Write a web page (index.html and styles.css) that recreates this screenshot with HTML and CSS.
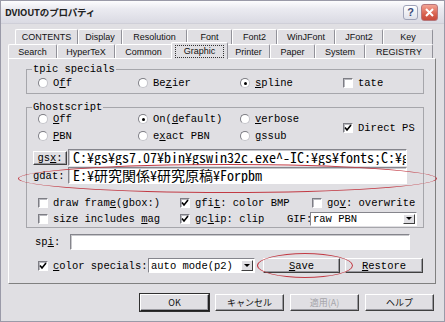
FILE: index.html
```html
<!DOCTYPE html>
<html lang="ja">
<head>
    <meta charset="UTF-8">
    <title>DVIOUTのプロパティ</title>
    <link rel="stylesheet" href="styles.css">
</head>
<body>
    <div class="window">
        <div class="titlebar">
            <span class="title">DVIOUTのプロパティ</span>
            <div class="caption-btns">
                <span class="cbtn help">?</span>
                <span class="cbtn close">
                    <svg width="9" height="9" viewBox="0 0 9 9"><path d="M1 1L8 8M8 1L1 8" stroke="#fff" stroke-width="2"/></svg>
                </span>
            </div>
        </div>

        <div class="content">
            <div class="tabs">
                <div class="tab-row back">
                    <span class="tab">CONTENTS</span>
                    <span class="tab">Display</span>
                    <span class="tab">Resolution</span>
                    <span class="tab">Font</span>
                    <span class="tab">Font2</span>
                    <span class="tab">WinJFont</span>
                    <span class="tab">JFont2</span>
                    <span class="tab">Key</span>
                </div>
                <div class="tab-row front">
                    <span class="tab">Search</span>
                    <span class="tab">HyperTeX</span>
                    <span class="tab">Common</span>
                    <span class="tab active"><span class="focus">Graphic</span></span>
                    <span class="tab">Printer</span>
                    <span class="tab">Paper</span>
                    <span class="tab">System</span>
                    <span class="tab">REGISTRY</span>
                </div>
            </div>

            <div class="panel">
                <fieldset class="group tpic">
                    <legend>tpic specials</legend>
                    <div class="opts">
                        <label class="opt"><span class="radio"></span><span>O<u>f</u>f</span></label>
                        <label class="opt"><span class="radio"></span><span>Be<u>z</u>ier</span></label>
                        <label class="opt"><span class="radio on"></span><span><u>s</u>pline</span></label>
                        <label class="opt"><span class="check"></span><span>tate</span></label>
                    </div>
                </fieldset>

                <fieldset class="group gs">
                    <legend>Ghostscript</legend>
                    <div class="opts gs-opts">
                        <label class="opt"><span class="radio"></span><span><u>O</u>ff</span></label>
                        <label class="opt"><span class="radio on"></span><span>On(<u>d</u>efault)</span></label>
                        <label class="opt"><span class="radio"></span><span><u>v</u>erbose</span></label>
                        <label class="opt direct"><span class="check on"><svg width="8" height="8" viewBox="0 0 8 8"><path d="M1 3.5L3 6L7 1" fill="none" stroke="#000" stroke-width="1.6"/></svg></span><span>Direct PS</span></label>
                        <label class="opt"><span class="radio"></span><span><u>P</u>BN</span></label>
                        <label class="opt"><span class="radio"></span><span>e<u>x</u>act PBN</span></label>
                        <label class="opt"><span class="radio"></span><span><u>g</u>ssub</span></label>
                    </div>

                    <div class="path-row">
                        <span class="btn gsx"><span>gs<u>x</u>:</span></span>
                        <div class="field path">C:¥gs¥gs7.07¥bin¥gswin32c.exe^-IC:¥gs¥fonts;C:¥gs¥lib</div>
                    </div>
                    <div class="path-row gdat-row">
                        <span class="path-label">gdat:</span>
                        <div class="field path">E:¥研究関係¥研究原稿¥Forpbm</div>
                    </div>

                    <div class="check-row first">
                        <label class="opt c1"><span class="check"></span><span>draw fram<u>e</u>(gbox:)</span></label>
                        <label class="opt c2"><span class="check on"><svg width="8" height="8" viewBox="0 0 8 8"><path d="M1 3.5L3 6L7 1" fill="none" stroke="#000" stroke-width="1.6"/></svg></span><span>gfi<u>t</u>: color BMP</span></label>
                        <label class="opt"><span class="check"></span><span>go<u>v</u>: overwrite</span></label>
                    </div>
                    <div class="check-row">
                        <label class="opt c1"><span class="check"></span><span>size includes <u>m</u>ag</span></label>
                        <label class="opt c2 narrow"><span class="check on"><svg width="8" height="8" viewBox="0 0 8 8"><path d="M1 3.5L3 6L7 1" fill="none" stroke="#000" stroke-width="1.6"/></svg></span><span>gc<u>l</u>ip: clip</span></label>
                        <span class="gif-label">GIF:</span>
                        <div class="select gif"><span class="select-text">raw PBN</span><span class="arrow"></span></div>
                    </div>
                </fieldset>

                <div class="spi-row">
                    <span class="spi-label">sp<u>i</u>:</span>
                    <div class="field spi"></div>
                </div>

                <div class="color-row">
                    <label class="opt color-check"><span class="check on"><svg width="8" height="8" viewBox="0 0 8 8"><path d="M1 3.5L3 6L7 1" fill="none" stroke="#000" stroke-width="1.6"/></svg></span><span><u>c</u>olor specials:</span></label>
                    <div class="select mode"><span class="select-text">auto mode(p2)</span><span class="arrow"></span></div>
                    <span class="btn save"><span><u>S</u>ave</span></span>
                    <span class="btn restore"><span><u>R</u>estore</span></span>
                </div>
            </div>

            <div class="dlg-btns">
                <span class="btn dlg default">OK</span>
                <span class="btn dlg">キャンセル</span>
                <span class="btn dlg disabled">適用(A)</span>
                <span class="btn dlg">ヘルプ</span>
            </div>
        </div>

        <!-- red marks drawn over the screenshot -->
        <div class="mark mark-gdat"></div>
        <div class="mark mark-save"></div>
    </div>
</body>
</html>
```

FILE: styles.css
```css
body {
    margin: 0;
    background: #fff;
}

.window {
    position: relative;
    width: 445px;
    height: 322px;
    box-sizing: border-box;
    border: 1px solid #9a9aa8;
    background: #e0dfe3;
    font-family: "Liberation Mono", "Noto Sans CJK JP", monospace;
    font-size: 10.5px;
    color: #000;
    overflow: hidden;
}

/* title bar */
.titlebar {
    height: 22px;
    display: flex;
    align-items: center;
    justify-content: space-between;
    padding: 0 6px 0 4px;
    background: linear-gradient(#fdfdfe 0%, #ebebf1 35%, #dadae3 100%);
    border-bottom: 1px solid #cfcfd8;
}

.title {
    font-family: "Noto Sans CJK JP", "DejaVu Sans", sans-serif;
    font-weight: bold;
    font-size: 9.5px;
    color: #222;
    letter-spacing: -0.2px;
}

.caption-btns {
    display: flex;
    gap: 3px;
    align-items: center;
}

.cbtn {
    width: 15px;
    height: 15px;
    border-radius: 3px;
    display: flex;
    align-items: center;
    justify-content: center;
    box-sizing: border-box;
}

.help {
    border: 1px solid #9fa3b8;
    background: linear-gradient(#ffffff, #dfe1ea);
    color: #3c4a7a;
    font-family: "Liberation Sans", sans-serif;
    font-weight: bold;
    font-size: 11px;
}

.close {
    width: 17px;
    height: 17px;
    border: 1px solid #b7767a;
    background: linear-gradient(#f3a394, #d8624f 60%, #c74a3b);
}

/* tabs */
.content {
    padding: 5px 8px 0 7px;
}

.tab-row {
    display: grid;
    font-family: "Liberation Sans", sans-serif;
    font-size: 9px;
    color: #111;
}

.tab-row.back {
    height: 15px;
    margin-left: 7px;
    grid-template-columns: 63px 44px 65px 45px 45px 58px 48px 50px;
}

.tab-row.front {
    height: 14px;
    grid-template-columns: 49px 58px 57px 55px 43px 45px 50px 68px;
}

.tab {
    display: flex;
    align-items: center;
    justify-content: center;
    border-top: 1px solid #fff;
    border-left: 1px solid #fff;
    border-right: 1px solid #919199;
    border-radius: 2px 2px 0 0;
    box-sizing: border-box;
}

.tab.active {
    position: relative;
    z-index: 1;
    margin: -2px -1px -1px -1px;
    background: #e0dfe3;
}

.focus {
    outline: 1px dotted #333;
    padding: 0 8px;
    line-height: 11px;
}

/* page panel */
.panel {
    height: 226px;
    box-sizing: border-box;
    border: 1px solid;
    border-color: #fff #808080 #808080 #fff;
    padding: 0 11px 0 17px;
}

.group {
    margin: 0;
    width: 398px;
    box-sizing: border-box;
    border: 1px solid #a6a6ab;
    padding: 2px 0 3px 11px;
    min-width: 0;
}

.group legend {
    margin-left: -6px;
    padding: 0 1px;
    line-height: 10px;
}

.tpic {
    margin-top: 5px;
}

.gs {
    margin-top: 8px;
    padding-top: 0;
    padding-bottom: 1px;
}

.opts {
    display: grid;
    grid-template-columns: 100px 102px 103px auto;
    grid-auto-rows: 14px;
    row-gap: 3px;
}

.opt {
    display: flex;
    align-items: center;
    gap: 5px;
    white-space: nowrap;
}

.gs-opts .direct {
    grid-column: 4;
    grid-row: 1 / 3;
}

.radio {
    width: 10px;
    height: 10px;
    box-sizing: border-box;
    border-radius: 50%;
    border: 1px solid;
    border-color: #7d7d84 #c4c4ca #c4c4ca #7d7d84;
    background: #fff;
    display: flex;
    align-items: center;
    justify-content: center;
    flex: none;
}

.radio.on::after {
    content: "";
    width: 3px;
    height: 3px;
    border-radius: 50%;
    background: #000;
}

.check {
    width: 10px;
    height: 10px;
    box-sizing: border-box;
    border: 1px solid;
    border-color: #7d7d84 #fff #fff #7d7d84;
    box-shadow: inset 1px 1px 0 #b8b8be;
    background: #fff;
    display: flex;
    align-items: center;
    justify-content: center;
    flex: none;
}

.check svg {
    display: block;
}

/* buttons and fields */
.btn {
    display: flex;
    align-items: center;
    justify-content: center;
    box-sizing: border-box;
    border: 1px solid;
    border-color: #fff #404040 #404040 #fff;
    box-shadow: inset -1px -1px 0 #9a9aa0;
    background: #e0dfe3;
    white-space: nowrap;
}

.field {
    box-sizing: border-box;
    border: 1px solid;
    border-color: #85858c #fff #fff #85858c;
    box-shadow: inset 1px 1px 0 #c8c8cc;
    background: #fff;
}

.path-row {
    display: flex;
    align-items: center;
    height: 17px;
    margin-top: 6px;
    margin-left: -5px;
}

.gdat-row {
    margin-top: 1px;
}

.gsx {
    width: 34px;
    height: 14px;
    margin-right: 1px;
}

.path-label {
    width: 35px;
}

.path {
    width: 339px;
    height: 17px;
    padding-left: 4px;
    font-family: "Noto Sans Mono CJK JP", "Noto Sans CJK JP", monospace;
    font-size: 14px;
    line-height: 15px;
    white-space: nowrap;
    overflow: hidden;
}

.check-row {
    display: flex;
    align-items: center;
    height: 15px;
    margin-top: 1px;
}

.check-row.first {
    margin-top: 12px;
    height: 14px;
}

.c1 {
    width: 142px;
}

.c2 {
    width: 132px;
}

.c2.narrow {
    width: 107px;
}

.gif-label {
    width: 23px;
}

.select {
    display: flex;
    align-items: center;
    box-sizing: border-box;
    height: 14px;
    border: 1px solid;
    border-color: #85858c #fff #fff #85858c;
    background: #fff;
    padding: 1px;
}

.select-text {
    flex: 1;
    padding-left: 1px;
    white-space: nowrap;
    overflow: hidden;
}

.arrow {
    width: 12px;
    height: 100%;
    box-sizing: border-box;
    border: 1px solid;
    border-color: #fff #404040 #404040 #fff;
    background: #e0dfe3;
    display: flex;
    align-items: center;
    justify-content: center;
}

.arrow::after {
    content: "";
    border-left: 3px solid transparent;
    border-right: 3px solid transparent;
    border-top: 3px solid #000;
}

.gif {
    width: 107px;
}

.spi-row {
    display: flex;
    align-items: center;
    margin: 6px 0 0 9px;
    height: 16px;
}

.spi-label {
    width: 35px;
}

.spi {
    width: 340px;
    height: 16px;
}

.color-row {
    display: flex;
    align-items: center;
    margin: 8px 0 0 12px;
    height: 15px;
}

.color-check {
    width: 110px;
}

.mode {
    width: 107px;
    height: 15px;
}

.save {
    width: 77px;
    height: 15px;
    margin-left: 8px;
}

.restore {
    width: 78px;
    height: 15px;
    margin-left: 5px;
}

/* dialog buttons */
.dlg-btns {
    display: flex;
    justify-content: flex-end;
    gap: 6px;
    margin-top: 10px;
    padding-right: 2px;
}

.dlg {
    width: 69px;
    height: 17px;
    font-family: "Noto Sans CJK JP", "Liberation Sans", sans-serif;
    font-size: 9px;
    color: #111;
}

.dlg.default {
    border-color: #fff #202020 #202020 #fff;
    outline: 1px solid #303030;
}

.dlg.disabled {
    color: #a5a5aa;
}

/* red annotation marks */
.mark {
    position: absolute;
    border: 1px solid #c23a44;
    border-radius: 50%;
}

.mark-gdat {
    left: 17px;
    top: 163px;
    width: 417px;
    height: 27px;
}

.mark-save {
    left: 256px;
    top: 252px;
    width: 94px;
    height: 23px;
}
```
